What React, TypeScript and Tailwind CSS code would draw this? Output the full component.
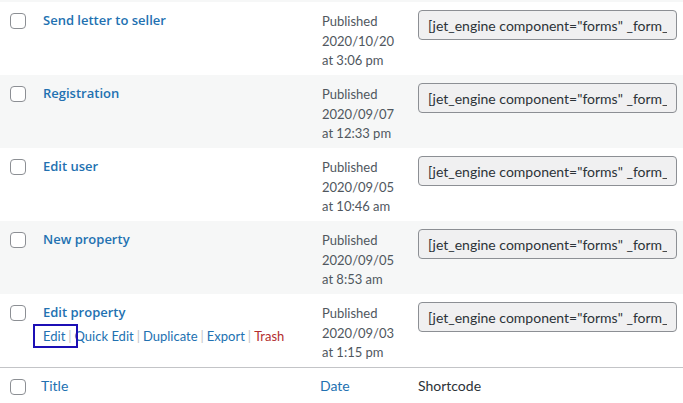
import React from 'react';

type Form = {
  title: string;
  date: string;
  time: string;
  id: number;
  alt: boolean;
  actions?: boolean;
};

const forms: Form[] = [
  { title: 'Send letter to seller', date: '2020/10/20', time: 'at 3:06 pm', id: 5012, alt: false },
  { title: 'Registration', date: '2020/09/07', time: 'at 12:33 pm', id: 4871, alt: true },
  { title: 'Edit user', date: '2020/09/05', time: 'at 10:46 am', id: 4855, alt: false },
  { title: 'New property', date: '2020/09/05', time: 'at 8:53 am', id: 4853, alt: true },
  { title: 'Edit property', date: '2020/09/03', time: 'at 1:15 pm', id: 4837, alt: false, actions: true },
];

const bodyFont = { fontFamily: 'Lato, "Open Sans", Arial, sans-serif' };
const titleFont = { fontFamily: '"Open Sans", "Noto Sans", Arial, sans-serif' };

function Checkbox() {
  return <span className="block w-4 h-4 rounded-[4px] border border-[#8c8f94] bg-white" />;
}

function Sep() {
  return <span className="text-[#c3c4c7] px-[3px]">|</span>;
}

export default function App() {
  return (
    <div className="w-[683px] h-[403px] overflow-hidden bg-white text-[13px] text-[#50575e]" style={bodyFont}>
      <div className="h-[2px] bg-[#f6f7f7]" />

      {forms.map(f => (
        <div
          key={f.title}
          className={`grid grid-cols-[33px_279px_96px_1fr] h-[73px] ${f.alt ? 'bg-[#f6f7f7]' : 'bg-white'}`}
        >
          <div className="pl-[10px] pt-[11px]">
            <Checkbox />
          </div>
          <div className="pl-[10px] pt-[9px] leading-[19px]">
            <div className="font-semibold text-[#2271b1]" style={titleFont}>
              {f.title}
            </div>
            {f.actions && (
              <div className="pt-[5px] text-[#2271b1] whitespace-nowrap">
                <span className="relative">
                  Edit
                  <span className="absolute -left-[10px] -right-[13px] -top-[4px] -bottom-[4px] border-2 border-[#1c0fb5]" />
                </span>
                <Sep />
                <span>Quick Edit</span>
                <Sep />
                <span>Duplicate</span>
                <Sep />
                <span>Export</span>
                <Sep />
                <span className="text-[#b32d2e]">Trash</span>
              </div>
            )}
          </div>
          <div className="pl-[10px] pt-[10px] leading-[19.5px]">
            <div>Published</div>
            <div>{f.date}</div>
            <div>{f.time}</div>
          </div>
          <div className="pl-[10px] pr-[6px] pt-[8px]">
            <input
              readOnly
              value={`[jet_engine component="forms" _form_id="${f.id}"]`}
              className="w-full h-[30px] px-[9px] rounded-[4px] border border-[#8c8f94] bg-[#f0f0f1] text-[14px] text-[#2c3338] outline-none"
              style={bodyFont}
            />
          </div>
        </div>
      ))}

      <div className="grid grid-cols-[33px_279px_96px_1fr] border-t border-[#c3c4c7] h-[40px] text-[14px]">
        <div className="pl-[10px] pt-[11px]">
          <Checkbox />
        </div>
        <div className="pl-[8px] pt-[7px] text-[#2271b1]">Title</div>
        <div className="pl-[8px] pt-[7px] text-[#2271b1]">Date</div>
        <div className="pl-[10px] pt-[7px] text-[#2c3338]">Shortcode</div>
      </div>
    </div>
  );
}
